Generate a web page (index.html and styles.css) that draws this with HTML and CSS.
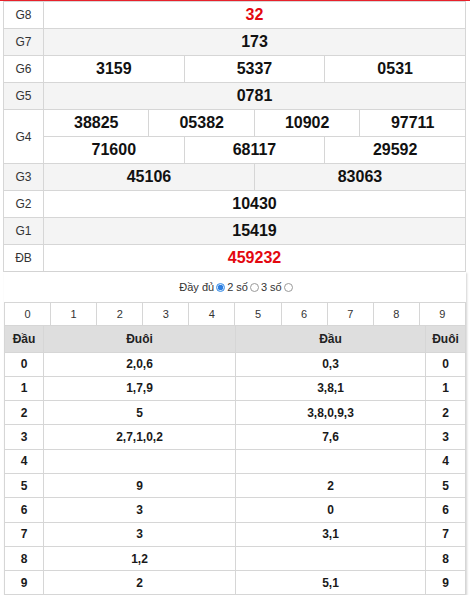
FILE: index.html
```html
<!DOCTYPE html>
<html>
<head>
<meta charset="utf-8">
<link rel="stylesheet" href="styles.css">
</head>
<body>
<div class="topline"></div>
<div class="wrap">
  <table class="kq">
    <colgroup>
      <col class="c-lbl">
      <col><col><col><col><col><col><col><col><col><col><col><col>
    </colgroup>
    <tr><td class="lbl">G8</td><td colspan="12" class="num red">32</td></tr>
    <tr class="alt"><td class="lbl">G7</td><td colspan="12" class="num">173</td></tr>
    <tr><td class="lbl">G6</td><td colspan="4" class="num">3159</td><td colspan="4" class="num">5337</td><td colspan="4" class="num">0531</td></tr>
    <tr class="alt"><td class="lbl">G5</td><td colspan="12" class="num">0781</td></tr>
    <tr><td class="lbl" rowspan="2">G4</td><td colspan="3" class="num">38825</td><td colspan="3" class="num">05382</td><td colspan="3" class="num">10902</td><td colspan="3" class="num">97711</td></tr>
    <tr><td colspan="4" class="num">71600</td><td colspan="4" class="num">68117</td><td colspan="4" class="num">29592</td></tr>
    <tr class="alt"><td class="lbl">G3</td><td colspan="6" class="num">45106</td><td colspan="6" class="num">83063</td></tr>
    <tr><td class="lbl">G2</td><td colspan="12" class="num">10430</td></tr>
    <tr class="alt"><td class="lbl">G1</td><td colspan="12" class="num">15419</td></tr>
    <tr><td class="lbl">ĐB</td><td colspan="12" class="num red">459232</td></tr>
  </table>
  <div class="panel">
    <div class="opts">
      <span>Đầy đủ</span><span class="radio on"></span><span>2 số</span><span class="radio"></span><span>3 số</span><span class="radio"></span>
    </div>
    <table class="digits">
      <tr><td>0</td><td>1</td><td>2</td><td>3</td><td>4</td><td>5</td><td>6</td><td>7</td><td>8</td><td>9</td></tr>
    </table>
    <table class="loto">
      <colgroup><col class="c1"><col class="c2"><col class="c3"><col class="c4"></colgroup>
      <tr class="head"><td>Đầu</td><td>Đuôi</td><td>Đầu</td><td>Đuôi</td></tr>
      <tr><td>0</td><td>2,0,6</td><td>0,3</td><td>0</td></tr>
      <tr><td>1</td><td>1,7,9</td><td>3,8,1</td><td>1</td></tr>
      <tr><td>2</td><td>5</td><td>3,8,0,9,3</td><td>2</td></tr>
      <tr><td>3</td><td>2,7,1,0,2</td><td>7,6</td><td>3</td></tr>
      <tr><td>4</td><td></td><td></td><td>4</td></tr>
      <tr><td>5</td><td>9</td><td>2</td><td>5</td></tr>
      <tr><td>6</td><td>3</td><td>0</td><td>6</td></tr>
      <tr><td>7</td><td>3</td><td>3,1</td><td>7</td></tr>
      <tr><td>8</td><td>1,2</td><td></td><td>8</td></tr>
      <tr><td>9</td><td>2</td><td>5,1</td><td>9</td></tr>
    </table>
  </div>
</div>
</body>
</html>
```
FILE: styles.css
```css
html, body {
  margin: 0;
  padding: 0;
  background: #fff;
  font-family: "Liberation Sans", Arial, sans-serif;
  color: #222;
}
.topline {
  height: 1px;
  background: #e8212b;
}
.wrap {
  padding: 0 4px 0 3px;
}
table {
  border-collapse: collapse;
  table-layout: fixed;
  width: 100%;
}
td {
  border: 1px solid #d6d6d6;
  padding: 0;
  text-align: center;
}
.kq {
  width: 463px;
}
.kq .c-lbl { width: 40px; }
.kq tr { height: 27px; }
.kq tr.alt { background: #f4f4f4; }
.kq .lbl {
  font-size: 12px;
  color: #333;
  background: inherit;
}
.kq .num {
  font-size: 16px;
  font-weight: bold;
  color: #111;
}
.kq .red { color: #e3080f; }
.panel {
  margin-left: 1px;
  width: 462px;
  box-shadow: 1px 1px 2px rgba(0,0,0,0.18);
}
.opts {
  height: 30px;
  display: flex;
  align-items: center;
  justify-content: center;
  font-size: 11px;
  color: #333;
  padding-left: 4px;
  gap: 0;
}
.radio {
  display: inline-block;
  width: 7px;
  height: 7px;
  border: 1px solid #9a9a9a;
  border-radius: 50%;
  margin: 1px 2px 0 2px;
  background: #fff;
}
.radio.on {
  border-color: #3b8fe8;
  background: radial-gradient(circle, #2f7fe0 0 2.5px, #cfe3fb 3px);
}
.digits tr { height: 23px; }
.digits td {
  font-size: 11px;
  color: #333;
}
.digits tr td:first-child,
.loto tr td:first-child { border-left-color: #d6d6d6; }
.loto .c1 { width: 39px; }
.loto .c2 { width: 192px; }
.loto .c3 { width: 190px; }
.loto .c4 { width: 40px; }
.loto tr { height: 24.3px; }
.loto td {
  font-size: 12px;
  font-weight: bold;
  color: #1a1a1a;
}
.loto tr.head { height: 26px; background: #dedede; }
.loto tr.head td { color: #222; }
.loto tr:first-child td { border-top: none; }
```
